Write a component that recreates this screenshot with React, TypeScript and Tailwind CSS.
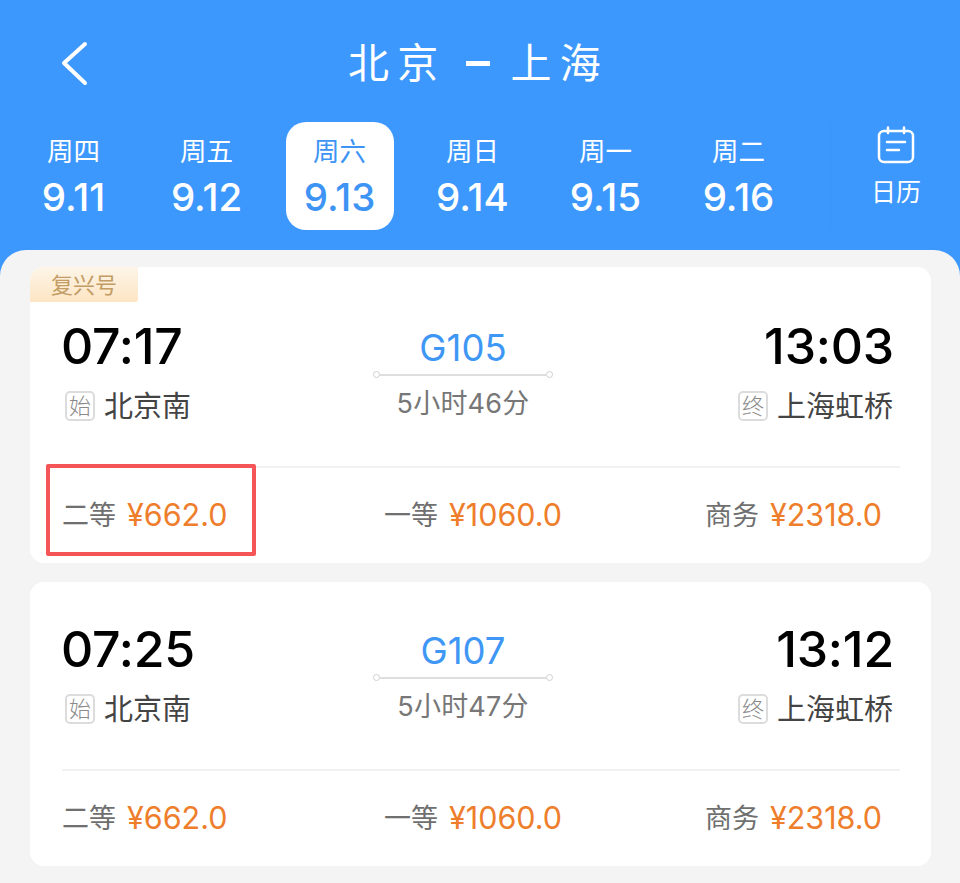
const FONT = "font-['Inter','Noto_Sans_CJK_SC',sans-serif]";

const days = [
  { w: "周四", d: "9.11" },
  { w: "周五", d: "9.12" },
  { w: "周六", d: "9.13", active: true },
  { w: "周日", d: "9.14" },
  { w: "周一", d: "9.15" },
  { w: "周二", d: "9.16" },
];

function Tag({ children }: { children: string }) {
  return (
    <span className="flex h-[30px] w-[30px] shrink-0 items-center justify-center rounded-[5px] border-2 border-[#dcdcdc] text-[22px] font-light leading-none text-[#8a8a8a]">
      {children}
    </span>
  );
}

function Price({ label, value }: { label: string; value: string }) {
  return (
    <div className="flex items-center gap-[11px]">
      <span className="text-[27px] leading-none text-[#6f6f6f]">{label}</span>
      <span className="text-[30.5px] leading-none text-[#ee7e2c]">{value}</span>
    </div>
  );
}

function Card({
  dep,
  arr,
  no,
  dur,
  first,
}: {
  dep: string;
  arr: string;
  no: string;
  dur: string;
  first?: boolean;
}) {
  return (
    <div className={"relative rounded-[14px] bg-white " + (first ? "h-[296px] pt-[52px]" : "h-[284px] pt-[40px]")}>
      {first && (
        <div className="absolute left-0 top-0 flex h-[35px] w-[108px] items-center justify-center rounded-br-[3px] rounded-tl-[14px] bg-gradient-to-b from-[#fdf5e8] to-[#fde5c3] text-[22px] leading-none text-[#c29c64]">
          复兴号
        </div>
      )}
      <div className="ml-[32px] mr-[37px] grid h-[147px] grid-cols-[311px_180px_1fr] items-start">
        <div className="flex flex-col">
          <div className="-ml-[1px] h-[54px] text-[50px] font-medium leading-[54px] tracking-[-0.2px] text-black">{dep}</div>
          <div className="mt-[18px] ml-[3px] flex items-center gap-[9px]">
            <Tag>始</Tag>
            <span className="text-[29px] leading-none text-[#444444]">北京南</span>
          </div>
        </div>
        <div className="flex flex-col items-center">
          <div className="mt-[2px] h-[40px] text-[36.5px] leading-[54px] text-[#3f97f5]">{no}</div>
          <div className="mt-[10px] flex w-full items-center">
            <span className="h-[7px] w-[7px] rounded-full border border-[#d0d0d0]" />
            <span className="h-[2px] flex-1 bg-[#dedede]" />
            <span className="h-[7px] w-[7px] rounded-full border border-[#d0d0d0]" />
          </div>
          <div className="mt-[12px] text-[27px] leading-none tracking-[0.2px] text-[#777777]">{dur}</div>
        </div>
        <div className="flex flex-col items-end">
          <div className="h-[54px] text-[50px] font-medium leading-[54px] tracking-[-0.2px] text-black">{arr}</div>
          <div className="mt-[18px] mr-[1px] flex items-center gap-[9px]">
            <Tag>终</Tag>
            <span className="text-[29px] leading-none text-[#444444]">上海虹桥</span>
          </div>
        </div>
      </div>
      <div className="ml-[32px] mr-[31px] h-[2px] bg-[#f1f1f1]" />
      <div className="ml-[32px] mt-[32px] grid grid-cols-[322px_321px_1fr] items-center">
        <Price label="二等" value="¥662.0" />
        <Price label="一等" value="¥1060.0" />
        <Price label="商务" value="¥2318.0" />
      </div>
    </div>
  );
}

export default function App() {
  return (
    <div className={"relative h-[883px] w-[960px] overflow-hidden bg-[#3d98fd] " + FONT}>
      <header className="h-[250px]">
        <div className="flex h-[122px] items-start pl-[60px] pr-[93px] pt-[38px]">
          <svg width="30" height="50" viewBox="0 0 30 50" fill="none" className="shrink-0">
            <path d="M25 6 L4 25 L25 45" stroke="#ffffff" strokeWidth="4" strokeLinecap="round" strokeLinejoin="round" />
          </svg>
          <h1 className="flex flex-1 items-center justify-center gap-[19px] text-[41px] font-normal leading-[50px] tracking-[0.2em] text-white">
            <span>北京</span>
            <span className="mr-[2px] h-[5px] w-[24px] bg-white" />
            <span>上海</span>
          </h1>
        </div>
        <div className="flex pl-[7px]">
          {days.map((x) => (
            <div key={x.d} className="flex w-[133px] justify-center">
              <div
                className={
                  "flex h-[108px] w-[108px] flex-col items-center rounded-[20px] pt-[13px] " +
                  (x.active ? "bg-white text-[#3d94f5]" : "text-white")
                }
              >
                <span className="text-[26.5px] leading-[32px]">{x.w}</span>
                <span className="mt-[8px] text-[38.5px] font-medium leading-[44px]">{x.d}</span>
              </div>
            </div>
          ))}
          <div className="ml-[26px] flex w-[129px] flex-col items-center border-l border-[#3b95fa] pt-[4px]">
            <svg width="38" height="38" viewBox="0 0 38 38" fill="none">
              <rect x="2" y="5" width="34" height="31" rx="5" stroke="#ffffff" strokeWidth="2.5" />
              <path d="M11 1.5V7M27 1.5V7" stroke="#ffffff" strokeWidth="2.5" strokeLinecap="round" />
              <path d="M10 16H28M10 24H22" stroke="#ffffff" strokeWidth="2.5" strokeLinecap="round" />
            </svg>
            <span className="mt-[13px] text-[25px] leading-[30px] text-white">日历</span>
          </div>
        </div>
      </header>
      <main className="flex h-[633px] flex-col gap-[19px] rounded-t-[26px] bg-[#f4f4f5] pl-[30px] pr-[29px] pt-[17px]">
        <Card first dep="07:17" arr="13:03" no="G105" dur="5小时46分" />
        <Card dep="07:25" arr="13:12" no="G107" dur="5小时47分" />
      </main>
      <div className="absolute left-[46px] top-[464px] h-[92px] w-[210px] rounded-[2px] border-[4px] border-[#f65558]" />
    </div>
  );
}
